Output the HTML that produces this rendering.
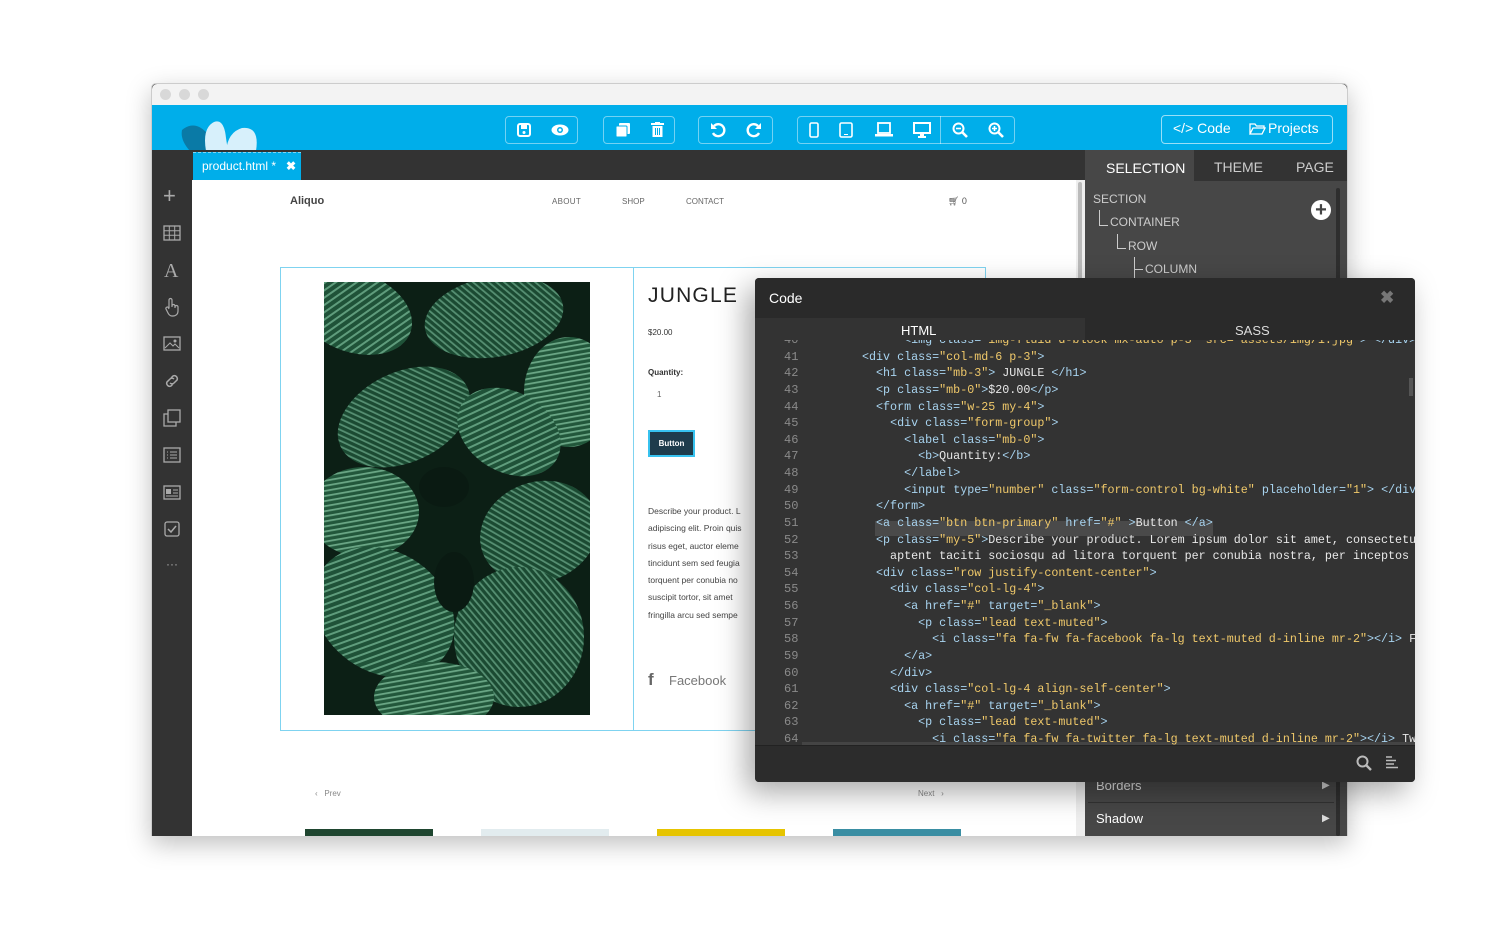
<!DOCTYPE html>
<html><head><meta charset="utf-8"><style>
*{margin:0;padding:0;box-sizing:border-box}
body{width:1500px;height:936px;background:#fff;position:relative;overflow:hidden;font-family:"Liberation Sans",sans-serif}
.a{position:absolute}
.win{left:151px;top:83px;width:1197px;height:753px;background:#333;border-radius:5px 5px 0 0;box-shadow:0 8px 25px rgba(0,0,0,.25);overflow:hidden;border:1px solid #ccc}
.grp{border:1px solid rgba(255,255,255,.45);border-radius:4px;height:28px;top:116px}
.code{font-family:"Liberation Mono",monospace;font-size:11.7px;color:#e8e8e8;white-space:pre}
.ln{color:#8a8a8a;font-family:"Liberation Mono",monospace;font-size:12px}
.t{color:#a8d4f0}.s{color:#f0c96a}
</style></head><body>
<div class="a win"></div>
<div class="a" style="left:152px;top:84px;width:1195px;height:21px;background:#f3f3f3;border-radius:5px 5px 0 0"></div>
<div class="a" style="left:160px;top:89px;width:11px;height:11px;border-radius:50%;background:#d8d8d8"></div>
<div class="a" style="left:179px;top:89px;width:11px;height:11px;border-radius:50%;background:#d8d8d8"></div>
<div class="a" style="left:198px;top:89px;width:11px;height:11px;border-radius:50%;background:#d8d8d8"></div>
<div class="a" style="left:152px;top:105px;width:1195px;height:45px;background:#00aeea"></div>
<svg class="a" style="left:176px;top:118px" width="84" height="33"><path d="M6 12 Q18 2 30 14 L34 33 L14 33 Q4 22 6 12Z" fill="#0a7aa6"/><path d="M30 33 Q26 10 38 4 Q48 0 50 20 L52 33Z" fill="#d7f0fb"/><path d="M50 33 Q52 14 66 10 Q84 8 80 33Z" fill="#d7f0fb"/></svg>
<div class="a grp" style="left:505px;width:73px"></div>
<div class="a grp" style="left:603px;width:72px"></div>
<div class="a grp" style="left:698px;width:75px"></div>
<div class="a grp" style="left:797px;width:218px"></div>
<div class="a" style="left:940px;top:116px;width:1px;height:28px;background:rgba(255,255,255,.45)"></div>
<svg class="a" style="left:517px;top:123px" width="14" height="14"><rect x="1" y="1" width="12" height="12" rx="2" fill="none" stroke="#fff" stroke-width="2"/><rect x="4" y="2" width="6" height="4" fill="#fff"/><circle cx="7" cy="9.5" r="1.5" fill="#fff"/></svg>
<svg class="a" style="left:551px;top:124px" width="18" height="12"><ellipse cx="9" cy="6" rx="8.5" ry="5.5" fill="#fff"/><circle cx="9" cy="6" r="3" fill="#00aeea"/><circle cx="9" cy="6" r="1.5" fill="#fff"/></svg>
<svg class="a" style="left:615px;top:122px" width="16" height="16"><rect x="4" y="1" width="11" height="11" rx="1" fill="#fff"/><rect x="1" y="4" width="11" height="11" rx="1" fill="#fff" stroke="#00aeea"/></svg>
<svg class="a" style="left:651px;top:122px" width="13" height="16"><rect x="0" y="1" width="13" height="2" fill="#fff"/><rect x="4" y="0" width="5" height="2" fill="#fff"/><path d="M1.5 4h10v11h-10z" fill="#fff"/><path d="M4.5 6v7M6.5 6v7M8.5 6v7" stroke="#00aeea"/></svg>
<svg class="a" style="left:710px;top:122px" width="16" height="16"><path d="M4 4 A6 6 0 1 1 3 11" fill="none" stroke="#fff" stroke-width="2.4"/><path d="M1 1v6h6z" fill="#fff"/></svg>
<svg class="a" style="left:746px;top:122px" width="16" height="16"><path d="M12 4 A6 6 0 1 0 13 11" fill="none" stroke="#fff" stroke-width="2.4"/><path d="M15 1v6h-6z" fill="#fff"/></svg>
<svg class="a" style="left:809px;top:122px" width="10" height="16"><rect x="1" y="1" width="8" height="14" rx="1.5" fill="none" stroke="#fff" stroke-width="1.6"/></svg>
<svg class="a" style="left:839px;top:122px" width="14" height="16"><rect x="1" y="1" width="12" height="14" rx="1.5" fill="none" stroke="#fff" stroke-width="1.6"/><rect x="5" y="12" width="4" height="1" fill="#fff"/></svg>
<svg class="a" style="left:875px;top:122px" width="18" height="16"><rect x="3" y="1" width="12" height="10" fill="none" stroke="#fff" stroke-width="1.8"/><rect x="0" y="12" width="18" height="2.5" fill="#fff"/></svg>
<svg class="a" style="left:913px;top:122px" width="18" height="16"><rect x="1" y="1" width="16" height="10" fill="none" stroke="#fff" stroke-width="2"/><rect x="7" y="11" width="4" height="3" fill="#fff"/><rect x="5" y="14" width="8" height="2" fill="#fff"/></svg>
<svg class="a" style="left:952px;top:122px" width="16" height="16"><circle cx="6.5" cy="6.5" r="5" fill="none" stroke="#fff" stroke-width="2"/><path d="M10 10l5 5" stroke="#fff" stroke-width="2.6"/><path d="M4 6.5h5" stroke="#fff" stroke-width="1.6"/></svg>
<svg class="a" style="left:988px;top:122px" width="16" height="16"><circle cx="6.5" cy="6.5" r="5" fill="none" stroke="#fff" stroke-width="2"/><path d="M10 10l5 5" stroke="#fff" stroke-width="2.6"/><path d="M4 6.5h5M6.5 4v5" stroke="#fff" stroke-width="1.6"/></svg>
<div class="a" style="left:1161px;top:115px;width:172px;height:29px;border:1px solid rgba(255,255,255,.6);border-radius:4px"></div>
<div class="a" style="left:1173px;top:120px;color:#fff;font-size:14px">&lt;/&gt; Code</div>
<svg class="a" style="left:1249px;top:122px" width="17" height="13"><path d="M1 12V2h5l1.5 2H15v2M1 12l3-6h12l-3 6z" fill="none" stroke="#fff" stroke-width="1.3"/></svg>
<div class="a" style="left:1268px;top:120px;color:#fff;font-size:14px">Projects</div>
<div class="a" style="left:192px;top:150px;width:890px;height:30px;background:#333"></div>
<div class="a" style="left:193px;top:152px;width:108px;height:28px;background:#00aeea;border-top:1px dashed #7fd6f5"></div>
<div class="a" style="left:202px;top:159px;color:#fff;font-size:12px">product.html *&nbsp;&nbsp; <b>✖</b></div>
<div class="a" style="left:152px;top:150px;width:40px;height:686px;background:#333"></div>
<div class="a" style="left:163px;top:183px;color:#aaa;font-size:22px;font-weight:300">+</div>
<svg class="a" style="left:163px;top:225px" width="18" height="16"><rect x="1" y="1" width="16" height="14" fill="none" stroke="#aaa" stroke-width="1.3"/><path d="M1 5.7h16M1 10.3h16M6.3 1v14M11.7 1v14" stroke="#aaa"/></svg>
<div class="a" style="left:164px;top:260px;color:#aaa;font-size:20px;font-family:'Liberation Serif',serif">A</div>
<svg class="a" style="left:164px;top:297px" width="16" height="20"><path d="M5 11V3a1.5 1.5 0 0 1 3 0v7M8 9a1.5 1.5 0 0 1 3 0v2M11 10a1.5 1.5 0 0 1 3 0v4c0 3-2 5-5 5H8c-2 0-3-1-4-3L2 12a1.4 1.4 0 0 1 2.4-1.4L5 12" fill="none" stroke="#aaa" stroke-width="1.2"/></svg>
<svg class="a" style="left:163px;top:336px" width="18" height="15"><rect x="1" y="1" width="16" height="13" fill="none" stroke="#aaa" stroke-width="1.3"/><path d="M2 12l5-5 3 3 2-2 4 4" fill="none" stroke="#aaa"/><circle cx="12" cy="5" r="1.5" fill="#aaa"/></svg>
<svg class="a" style="left:163px;top:372px" width="18" height="18"><path d="M8 6l2-2a3 3 0 0 1 4 4l-3 3a3 3 0 0 1-4 0M10 12l-2 2a3 3 0 0 1-4-4l3-3a3 3 0 0 1 4 0" fill="none" stroke="#aaa" stroke-width="1.5"/></svg>
<svg class="a" style="left:163px;top:409px" width="18" height="18"><rect x="5" y="1" width="12" height="12" fill="none" stroke="#aaa" stroke-width="1.3"/><path d="M5 5H1v12h12v-4" fill="none" stroke="#aaa" stroke-width="1.3"/></svg>
<svg class="a" style="left:163px;top:447px" width="18" height="16"><rect x="1" y="1" width="16" height="14" fill="none" stroke="#aaa" stroke-width="1.3"/><path d="M4 5h1M7 5h7M4 8h1M7 8h7M4 11h1M7 11h7" stroke="#aaa"/></svg>
<svg class="a" style="left:163px;top:485px" width="18" height="15"><rect x="1" y="1" width="16" height="13" fill="none" stroke="#aaa" stroke-width="1.3"/><rect x="3" y="4" width="5" height="5" fill="#aaa"/><path d="M10 5h5M10 8h5M3 11h12" stroke="#aaa"/></svg>
<svg class="a" style="left:164px;top:521px" width="16" height="16"><rect x="1" y="1" width="14" height="14" rx="2" fill="none" stroke="#aaa" stroke-width="1.3"/><path d="M4 8l3 3 5-6" fill="none" stroke="#aaa" stroke-width="1.5"/></svg>
<div class="a" style="left:166px;top:557px;color:#aaa;font-size:12px">···</div>
<div class="a" style="left:192px;top:180px;width:884px;height:656px;background:#fff"></div>
<div class="a" style="left:1076px;top:180px;width:9px;height:656px;background:#eee"></div>
<div class="a" style="left:1078px;top:182px;width:4px;height:110px;background:#bbb;border-radius:2px"></div>
<div class="a" style="left:290px;top:195px;font-size:11px;font-weight:bold;color:#444">Aliquo</div>
<div class="a" style="left:552px;top:197px;font-size:8px;color:#666;letter-spacing:.3px">ABOUT</div>
<div class="a" style="left:622px;top:197px;font-size:8px;color:#666">SHOP</div>
<div class="a" style="left:686px;top:197px;font-size:8px;color:#666">CONTACT</div>
<div class="a" style="left:948px;top:196px;font-size:9px;color:#555">🛒︎ 0</div>
<div class="a" style="left:280px;top:267px;width:706px;height:464px;border:1px solid #7fd3f0"></div>
<div class="a" style="left:633px;top:267px;width:1px;height:464px;background:#7fd3f0"></div>
<svg class="a" style="left:324px;top:282px" width="266" height="433">
<defs><pattern id="st" width="6" height="6" patternUnits="userSpaceOnUse" patternTransform="rotate(35)"><rect width="6" height="6" fill="#1f5238"/><rect width="2" height="6" fill="#5f9c7c"/></pattern>
<pattern id="st2" width="5" height="5" patternUnits="userSpaceOnUse" patternTransform="rotate(-40)"><rect width="5" height="5" fill="#1b4a32"/><rect width="1.8" height="5" fill="#568f72"/></pattern>
<pattern id="st3" width="5" height="5" patternUnits="userSpaceOnUse" patternTransform="rotate(80)"><rect width="5" height="5" fill="#22573b"/><rect width="1.8" height="5" fill="#6aa685"/></pattern></defs>
<rect width="266" height="433" fill="#0c1f15"/>
<ellipse cx="30" cy="30" rx="60" ry="40" fill="url(#st)" transform="rotate(20 30 30)"/>
<ellipse cx="170" cy="35" rx="70" ry="40" fill="url(#st2)" transform="rotate(-10 170 35)"/>
<ellipse cx="245" cy="110" rx="45" ry="55" fill="url(#st3)"/>
<ellipse cx="80" cy="135" rx="70" ry="45" fill="url(#st2)" transform="rotate(-25 80 135)"/>
<ellipse cx="185" cy="150" rx="55" ry="40" fill="url(#st)" transform="rotate(30 185 150)"/>
<ellipse cx="40" cy="230" rx="55" ry="45" fill="url(#st3)"/>
<ellipse cx="215" cy="250" rx="60" ry="50" fill="url(#st2)" transform="rotate(-20 215 250)"/>
<ellipse cx="120" cy="205" rx="25" ry="20" fill="#0a1a12"/>
<ellipse cx="60" cy="330" rx="75" ry="60" fill="url(#st)" transform="rotate(35 60 330)"/>
<ellipse cx="195" cy="355" rx="65" ry="70" fill="url(#st2)"/>
<ellipse cx="110" cy="415" rx="60" ry="35" fill="url(#st3)"/>
<ellipse cx="130" cy="300" rx="20" ry="30" fill="#0a1a12"/>
</svg>
<div class="a" style="left:648px;top:284px;font-size:21px;color:#222;letter-spacing:1.2px">JUNGLE</div>
<div class="a" style="left:648px;top:328px;font-size:8px;color:#333">$20.00</div>
<div class="a" style="left:648px;top:368px;font-size:8px;font-weight:bold;color:#333">Quantity:</div>
<div class="a" style="left:657px;top:390px;font-size:8px;color:#666">1</div>
<div class="a" style="left:648px;top:430px;width:47px;height:27px;background:#1e3c4c;border:2px solid #37c2ef;color:#fff;font-size:8px;text-align:center;line-height:23px;font-weight:bold">Button</div>
<div class="a" style="left:648px;top:503px;font-size:8.5px;color:#444;line-height:17.3px;width:108px;overflow:hidden;white-space:nowrap">Describe your product. L<br>adipiscing elit. Proin quis<br>risus eget, auctor eleme<br>tincidunt sem sed feugia<br>torquent per conubia no<br>suscipit tortor, sit amet<br>fringilla arcu sed sempe</div>
<div class="a" style="left:648px;top:670px;font-size:17px;color:#666;font-weight:bold">f</div>
<div class="a" style="left:669px;top:673px;font-size:13px;color:#777">Facebook</div>
<div class="a" style="left:315px;top:789px;font-size:8px;color:#888">‹&nbsp;&nbsp; Prev</div>
<div class="a" style="left:918px;top:789px;font-size:8px;color:#888">Next&nbsp;&nbsp; ›</div>
<div class="a" style="left:305px;top:829px;width:128px;height:7px;background:#1f4630"></div>
<div class="a" style="left:481px;top:829px;width:128px;height:7px;background:#e2ecef"></div>
<div class="a" style="left:657px;top:829px;width:128px;height:7px;background:#e6c400"></div>
<div class="a" style="left:833px;top:829px;width:128px;height:7px;background:#3a8ea3"></div>
<div class="a" style="left:1085px;top:150px;width:262px;height:686px;background:#474747"></div>
<div class="a" style="left:1194px;top:150px;width:153px;height:31px;background:#333"></div>
<div class="a" style="left:1106px;top:160px;color:#fff;font-size:14px">SELECTION</div>
<div class="a" style="left:1214px;top:159px;color:#ccc;font-size:14px">THEME</div>
<div class="a" style="left:1296px;top:159px;color:#ccc;font-size:14px">PAGE</div>
<div class="a" style="left:1336px;top:188px;width:4px;height:648px;background:#2e2e2e;border-radius:2px"></div>
<div class="a" style="left:1093px;top:192px;color:#ccc;font-size:12px">SECTION</div>
<div class="a" style="left:1110px;top:215px;color:#ccc;font-size:12px">CONTAINER</div>
<div class="a" style="left:1128px;top:239px;color:#ccc;font-size:12px">ROW</div>
<div class="a" style="left:1145px;top:262px;color:#ccc;font-size:12px">COLUMN</div>
<div class="a" style="left:1099px;top:210px;width:9px;height:16px;border-left:1px solid #ccc;border-bottom:1px solid #ccc"></div>
<div class="a" style="left:1117px;top:234px;width:9px;height:15px;border-left:1px solid #ccc;border-bottom:1px solid #ccc"></div>
<div class="a" style="left:1134px;top:257px;width:9px;height:22px;border-left:1px solid #ccc"></div>
<div class="a" style="left:1134px;top:269px;width:9px;height:1px;background:#ccc"></div>
<div class="a" style="left:1311px;top:200px;width:20px;height:20px;border-radius:50%;background:#fff;color:#444;font-size:20px;font-weight:bold;line-height:20px;text-align:center">+</div>
<div class="a" style="left:1096px;top:778px;color:#ddd;font-size:13px">Borders</div>
<div class="a" style="left:1322px;top:780px;color:#ccc;font-size:10px">▶</div>
<div class="a" style="left:1088px;top:802px;width:246px;height:1px;background:#333"></div>
<div class="a" style="left:1096px;top:811px;color:#fff;font-size:13px">Shadow</div>
<div class="a" style="left:1322px;top:813px;color:#ddd;font-size:10px">▶</div>
<div class="a" style="left:755px;top:278px;width:660px;height:504px;background:#333;border-radius:4px;box-shadow:-8px 10px 30px rgba(0,0,0,.35);overflow:hidden">
 <div class="a" style="left:0;top:0;width:660px;height:40px;background:#2a2a2a"></div>
 <div class="a" style="left:14px;top:12px;color:#fff;font-size:14px">Code</div>
 <div class="a" style="left:625px;top:10px;color:#777;font-size:17px;font-weight:bold">✖</div>
 <div class="a" style="left:0;top:40px;width:330px;height:22px;background:#333"></div>
 <div class="a" style="left:330px;top:40px;width:330px;height:22px;background:#2a2a2a"></div>
 <div class="a" style="left:146px;top:45px;color:#fff;font-size:13px">HTML</div>
 <div class="a" style="left:480px;top:45px;color:#ddd;font-size:13px">SASS</div>
 <div class="a" style="left:0;top:467px;width:660px;height:37px;background:#2c2c2c;border-top:1px solid #222"></div>
 <svg class="a" style="left:601px;top:477px" width="16" height="16"><circle cx="6.5" cy="6.5" r="5" fill="none" stroke="#bbb" stroke-width="2"/><path d="M10 10l5 5" stroke="#bbb" stroke-width="2.4"/></svg>
 <svg class="a" style="left:630px;top:478px" width="14" height="14"><path d="M1 1h6M1 4.5h10M1 8h8M1 11.5h12" stroke="#bbb" stroke-width="1.4"/></svg>
 <div class="a" style="left:47px;top:464px;width:613px;height:3px;background:#444"></div>
 <div class="a" style="left:654px;top:100px;width:4px;height:18px;background:#555"></div>
</div>
<div class="a" style="left:756px;top:340px;width:659px;height:405px;overflow:hidden">
<div class="a" style="left:0;top:-8px;width:659px">
<div class="a" style="left:119px;top:189px;width:338px;height:15px;background:#4a4a4a"></div>
<div class="a ln" style="left:28px;top:0;line-height:16.63px">40<br>41<br>42<br>43<br>44<br>45<br>46<br>47<br>48<br>49<br>50<br>51<br>52<br>53<br>54<br>55<br>56<br>57<br>58<br>59<br>60<br>61<br>62<br>63<br>64</div>
<div class="a code" style="left:106px;top:0;line-height:16.63px">      <span class="t">&lt;img class=</span><span class="s">"img-fluid d-block mx-auto p-3" src="assets/img/1.jpg"</span><span class="t">&gt; &lt;/div&gt;</span>
<span class="t">&lt;div class=</span><span class="s">"col-md-6 p-3"</span><span class="t">&gt;</span>
  <span class="t">&lt;h1 class=</span><span class="s">"mb-3"</span><span class="t">&gt;</span> JUNGLE <span class="t">&lt;/h1&gt;</span>
  <span class="t">&lt;p class=</span><span class="s">"mb-0"</span><span class="t">&gt;</span>$20.00<span class="t">&lt;/p&gt;</span>
  <span class="t">&lt;form class=</span><span class="s">"w-25 my-4"</span><span class="t">&gt;</span>
    <span class="t">&lt;div class=</span><span class="s">"form-group"</span><span class="t">&gt;</span>
      <span class="t">&lt;label class=</span><span class="s">"mb-0"</span><span class="t">&gt;</span>
        <span class="t">&lt;b&gt;</span>Quantity:<span class="t">&lt;/b&gt;</span>
      <span class="t">&lt;/label&gt;</span>
      <span class="t">&lt;input type=</span><span class="s">"number"</span> <span class="t">class=</span><span class="s">"form-control bg-white"</span> <span class="t">placeholder=</span><span class="s">"1"</span><span class="t">&gt; &lt;/div</span>
  <span class="t">&lt;/form&gt;</span>
  <span class="t">&lt;a class=</span><span class="s">"btn btn-primary"</span> <span class="t">href=</span><span class="s">"#"</span> <span class="t">&gt;</span>Button <span class="t">&lt;/a&gt;</span>
  <span class="t">&lt;p class=</span><span class="s">"my-5"</span><span class="t">&gt;</span>Describe your product. Lorem ipsum dolor sit amet, consectetur
    aptent taciti sociosqu ad litora torquent per conubia nostra, per inceptos
  <span class="t">&lt;div class=</span><span class="s">"row justify-content-center"</span><span class="t">&gt;</span>
    <span class="t">&lt;div class=</span><span class="s">"col-lg-4"</span><span class="t">&gt;</span>
      <span class="t">&lt;a href=</span><span class="s">"#"</span> <span class="t">target=</span><span class="s">"_blank"</span><span class="t">&gt;</span>
        <span class="t">&lt;p class=</span><span class="s">"lead text-muted"</span><span class="t">&gt;</span>
          <span class="t">&lt;i class=</span><span class="s">"fa fa-fw fa-facebook fa-lg text-muted d-inline mr-2"</span><span class="t">&gt;&lt;/i&gt;</span> F
      <span class="t">&lt;/a&gt;</span>
    <span class="t">&lt;/div&gt;</span>
    <span class="t">&lt;div class=</span><span class="s">"col-lg-4 align-self-center"</span><span class="t">&gt;</span>
      <span class="t">&lt;a href=</span><span class="s">"#"</span> <span class="t">target=</span><span class="s">"_blank"</span><span class="t">&gt;</span>
        <span class="t">&lt;p class=</span><span class="s">"lead text-muted"</span><span class="t">&gt;</span>
          <span class="t">&lt;i class=</span><span class="s">"fa fa-fw fa-twitter fa-lg text-muted d-inline mr-2"</span><span class="t">&gt;&lt;/i&gt;</span> Tw</div>
</div></div>
</body></html>
